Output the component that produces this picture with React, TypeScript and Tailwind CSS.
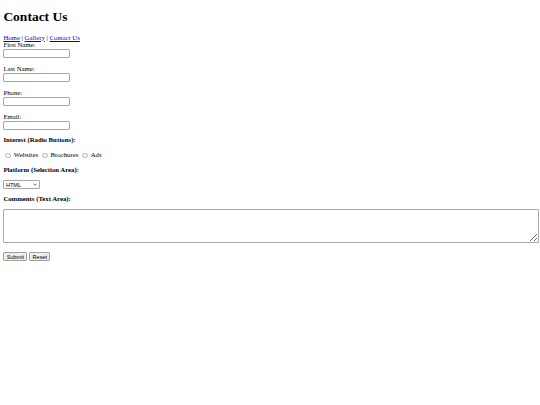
import React from "react";

const fields = ["First Name:", "Last Name:", "Phone:", "Email:"];

function Radio({ label, first }: { label: string; first?: boolean }) {
  return (
    <label className={first ? "flex items-center" : "ml-[2px] flex items-center"}>
      <span className="ml-[2.1px] mr-[1.1px] mt-[1px] inline-block size-[5.6px] rounded-full border border-[#b0b0b0] bg-white" />
      <span className="ml-[1.7px]">{label}</span>
    </label>
  );
}

export default function App() {
  return (
    <div className="min-h-[405px] w-[540px] bg-white px-[3.375px] pt-[9.05px] font-['Liberation_Serif','Times_New_Roman',serif] text-[6.75px] leading-[7.76px] text-black">
      <h1 className="mb-[9.05px] text-[13.5px] font-bold leading-[15.5px]">Contact Us</h1>
      <nav className="leading-[7.76px]">
        <a href="#" className="text-[#0000ee] underline">Home</a> |{" "}
        <a href="#" className="text-[#0000ee] underline">Gallery</a> |{" "}
        <a href="#" className="text-[#0000ee] underline">Contact Us</a>
      </nav>
      <form className="flex flex-col items-start">
        {fields.map((f, i) => (
          <div key={f} className="flex flex-col items-start">
            <label className="leading-[7.76px]">{f}</label>
            <input
              type="text"
              className="my-[0.1px] h-[8.3px] w-[66.6px] rounded-[1px] border border-[#a8a8a8] bg-white"
            />
            {i < fields.length - 1 && <div className="h-[7.76px]" />}
          </div>
        ))}
        <p className="mt-[6.75px] font-bold">Interest (Radio Buttons):</p>
        <div className="mt-[6.75px] flex h-[8.2px] items-center">
          <Radio label="Websites" first />
          <Radio label="Brochures" />
          <Radio label="Ads" />
        </div>
        <p className="mt-[6.75px] font-bold">Platform (Selection Area):</p>
        <div className="mt-[6.75px] flex h-[8.4px] w-[37px] items-center rounded-[1px] border border-[#a8a8a8] bg-white pl-[1.5px] pr-[2.5px] font-['Liberation_Sans',Arial,sans-serif] text-[5.6px]">
          <select className="min-w-0 flex-1 appearance-none bg-transparent leading-[6px] outline-none">
            <option>HTML</option>
            <option>CSS</option>
            <option>JavaScript</option>
          </select>
          <svg width="4" height="3" viewBox="0 0 8 5" className="shrink-0">
            <path d="M1 1 L4 4 L7 1" fill="none" stroke="#333" strokeWidth="1.4" />
          </svg>
        </div>
        <p className="mt-[6.75px] font-bold">Comments (Text Area):</p>
        <textarea className="mt-[6px] h-[34px] w-[535.8px] rounded-[1px] border border-[#a8a8a8] bg-white" />
        <div className="mt-[9px] flex gap-[2px] font-['Liberation_Sans',Arial,sans-serif] text-[5.6px] leading-[6px]">
          <button type="submit" className="flex h-[8.9px] w-[24px] items-center justify-center rounded-[1px] border border-[#a0a0a0] bg-[#efefef] text-black">
            Submit
          </button>
          <button type="reset" className="flex h-[8.9px] w-[21px] items-center justify-center rounded-[1px] border border-[#a0a0a0] bg-[#efefef] text-black">
            Reset
          </button>
        </div>
      </form>
    </div>
  );
}
